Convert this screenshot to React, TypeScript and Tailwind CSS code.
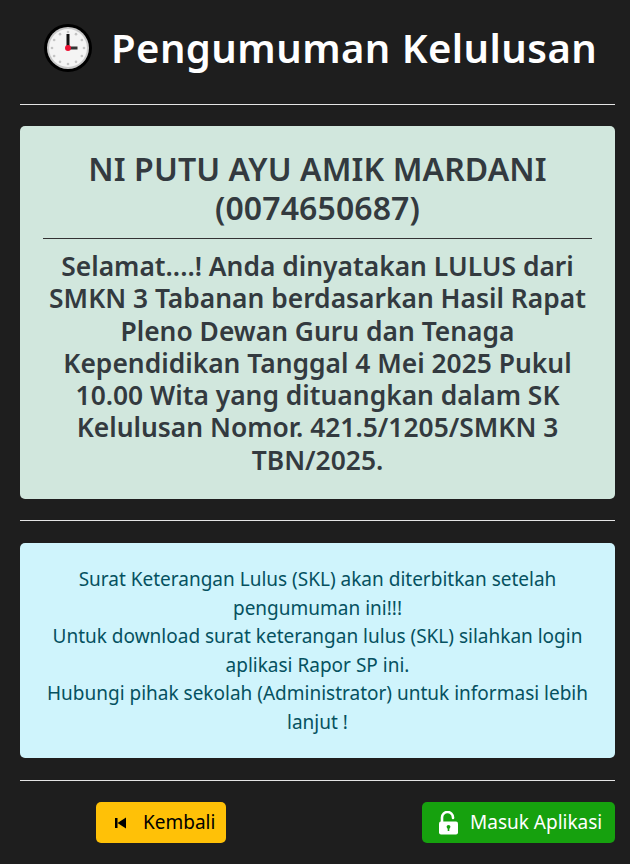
const font = "font-['Noto_Sans',sans-serif]";

function ClockIcon() {
  const dots = Array.from({ length: 12 }).map((_, i) => {
    const a = (i * Math.PI) / 6;
    return <circle key={i} cx={24 + 16 * Math.sin(a)} cy={24 - 16 * Math.cos(a)} r="1.3" fill="#c4c4c4" />;
  });
  return (
    <svg width="48" height="48" viewBox="0 0 48 48" className="shrink-0">
      <circle cx="24" cy="24" r="24" fill="#000" />
      <circle cx="24" cy="24" r="21" fill="#c8c8c8" />
      <circle cx="24" cy="24" r="19" fill="#f4f4f4" />
      {dots}
      <rect x="22.500" y="10" width="3" height="14" fill="#111" />
      <rect x="24" y="22.500" width="9.500" height="3" fill="#333" />
      <circle cx="24" cy="24" r="3" fill="#ee1133" />
    </svg>
  );
}

function Divider() {
  return <hr className="border-0 h-px bg-[#e4e4e4]" />;
}

export default function App() {
  return (
    <div className={`${font} w-[630px] h-[864px] overflow-hidden bg-[#1e1e1e] pl-5 pr-[15px]`}>
      <div className="h-[104px] flex items-center pl-6 pb-2 gap-[19px]">
        <ClockIcon />
        <h1 className="text-[40px] leading-[48px] font-semibold tracking-[0.45px] text-white whitespace-nowrap">Pengumuman Kelulusan</h1>
      </div>
      <Divider />
      <div className="mt-[21px] h-[373px] rounded-[5px] bg-[#d1e7dd] px-[23px] pt-[23px] text-center text-[#333a3f]">
        <h2 className="text-[32px] leading-[39px] font-semibold tracking-[0.1px]">NI PUTU AYU AMIK MARDANI (0074650687)</h2>
        <hr className="border-0 h-px bg-[#333] mt-[11px] mb-[11px]" />
        <h3 className="text-[26.4px] leading-[32.3px] font-semibold">
          Selamat....! Anda dinyatakan LULUS dari SMKN 3 Tabanan berdasarkan Hasil Rapat Pleno Dewan Guru dan Tenaga Kependidikan Tanggal 4 Mei 2025 Pukul 10.00 Wita yang dituangkan dalam SK Kelulusan Nomor. 421.5/1205/SMKN 3 TBN/2025.
        </h3>
      </div>
      <div className="mt-[21px]">
        <Divider />
      </div>
      <div className="mt-[22px] h-[215px] rounded-[5px] bg-[#cff4fc] px-[17px] pt-[22px] text-center text-[19px] leading-[28.5px] text-[#055160]">
        <p>Surat Keterangan Lulus (SKL) akan diterbitkan setelah pengumuman ini!!!</p>
        <p>Untuk download surat keterangan lulus (SKL) silahkan login aplikasi Rapor SP ini.</p>
        <p>Hubungi pihak sekolah (Administrator) untuk informasi lebih lanjut !</p>
      </div>
      <div className="mt-[22px]">
        <Divider />
      </div>
      <div className="mt-[21px] flex items-center justify-between">
        <button className="ml-[76px] w-[130px] h-[41px] rounded-[5px] bg-[#ffc107] text-black text-[19px] flex items-center pl-[19px] gap-4">
          <svg width="12" height="12" viewBox="0 0 12 12">
            <rect x="0" y="1" width="2.500" height="10" fill="#000" />
            <path d="M11 0.500V11.500L2.500 6z" fill="#000" />
          </svg>
          Kembali
        </button>
        <button className="w-[193px] h-[41px] rounded-[5px] bg-[#16a10e] text-white text-[19px] flex items-center pl-4 gap-[11px]">
          <svg width="21" height="24" viewBox="0 0 21 24">
            <path d="M4 11V6.500a5.500 5.500 0 0 1 11 0V7" fill="none" stroke="#fff" strokeWidth="2.600" strokeLinecap="round" />
            <rect x="1" y="10.500" width="19" height="13" rx="2" fill="#fff" />
            <circle cx="10.500" cy="15.800" r="1.900" fill="#16a10e" />
            <rect x="9.700" y="16" width="1.600" height="4" fill="#16a10e" />
          </svg>
          Masuk Aplikasi
        </button>
      </div>
    </div>
  );
}
